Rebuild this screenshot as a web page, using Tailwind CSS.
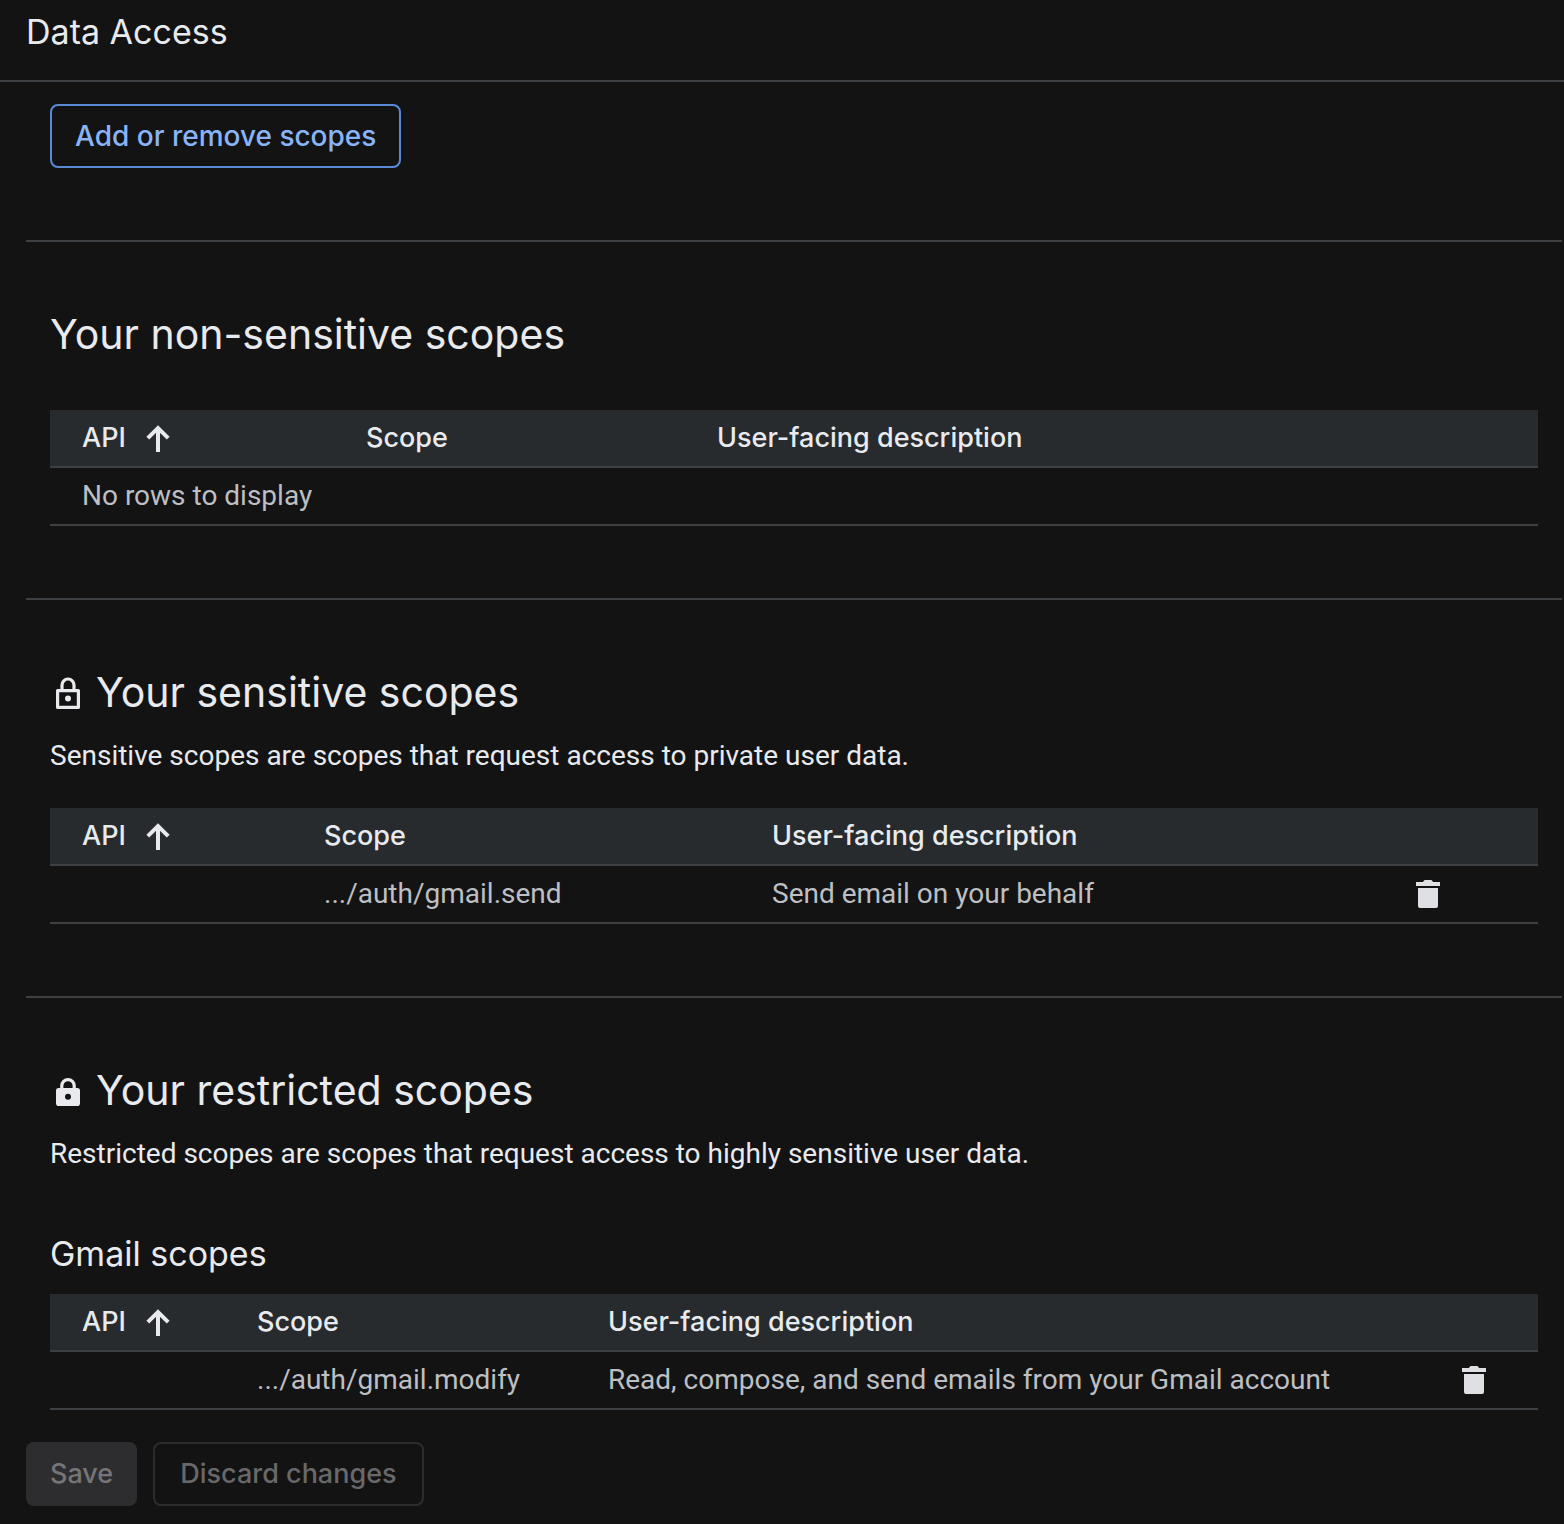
<!DOCTYPE html>
<html lang="en">
<head>
  <meta charset="UTF-8" />
  <meta name="viewport" content="width=device-width, initial-scale=1.0" />
  <title>Data Access</title>
  <script src="https://cdn.jsdelivr.net/npm/@tailwindcss/browser@4"></script>
</head>
<body class="min-h-screen bg-[#131314] text-[#e8eaed] text-[28px] leading-10 font-['Roboto',sans-serif]">
  <header class="px-[26px] pt-2 pb-6 border-b-2 border-[#3c4043]">
    <h1 class="text-[34px] leading-12 font-['Inter',sans-serif]">Data Access</h1>
  </header>

  <main class="pl-[26px] pr-0.5">
    <div class="px-6 pt-[22px] pb-[72px]">
      <button type="button" class="h-16 px-[23px] rounded-lg border-2 border-[#5a8ad6] text-[#8ab4f8] text-[28px] font-medium font-['Inter',sans-serif]">Add or remove scopes</button>
    </div>

    <!-- Non-sensitive -->
    <section class="px-6 pt-16 pb-[72px] border-t-2 border-[#3c4043]">
      <h2 class="text-[41px] leading-14 font-['Inter',sans-serif]">Your non-sensitive scopes</h2>
      <table class="w-full mt-12 table-fixed border-separate border-spacing-0 text-left">
        <colgroup>
          <col class="w-[284px]" />
          <col class="w-[351px]" />
          <col />
        </colgroup>
        <thead class="bg-[#272b2e] text-[27px] font-['Inter',sans-serif]">
          <tr class="h-[58px]">
            <th class="pl-8 py-0 font-medium border-b-2 border-[#3c4043]">
              <span class="flex items-center gap-3.5">API
                <svg class="size-9" viewBox="0 0 18 18" fill="none" stroke="currentColor" stroke-width="2" aria-hidden="true"><path d="M9 16V4M3.9 9.1L9 4l5.1 5.1" /></svg>
              </span>
            </th>
            <th class="pl-8 py-0 font-medium border-b-2 border-[#3c4043]">Scope</th>
            <th class="pl-8 py-0 font-medium border-b-2 border-[#3c4043]">User-facing description</th>
          </tr>
        </thead>
        <tbody class="text-[#bdbfc2]">
          <tr class="h-[58px]">
            <td colspan="3" class="pl-8 py-0 border-b-2 border-[#3c4043]">No rows to display</td>
          </tr>
        </tbody>
      </table>
    </section>

    <!-- Sensitive -->
    <section class="px-6 pt-16 pb-[72px] border-t-2 border-[#3c4043]">
      <h2 class="flex items-center gap-2.5 text-[41px] leading-14 font-['Inter',sans-serif]">
        <svg class="size-9" viewBox="0 0 18 18" aria-hidden="true">
          <path fill="none" stroke="currentColor" stroke-width="1.6" stroke-linejoin="round" d="M3.8 8.3h10.4v8.400H3.800zM6 8V5.500a3 3 0 0 1 6 0V8" />
          <circle cx="9" cy="12.300" r="1.500" fill="currentColor" />
        </svg>
        Your sensitive scopes
      </h2>
      <p class="mt-4">Sensitive scopes are scopes that request access to private user data.</p>
      <table class="w-full mt-8 table-fixed border-separate border-spacing-0 text-left">
        <colgroup>
          <col class="w-[242px]" />
          <col class="w-[448px]" />
          <col />
          <col class="w-[160px]" />
        </colgroup>
        <thead class="bg-[#272b2e] text-[27px] font-['Inter',sans-serif]">
          <tr class="h-[58px]">
            <th class="pl-8 py-0 font-medium border-b-2 border-[#3c4043]">
              <span class="flex items-center gap-3.5">API
                <svg class="size-9" viewBox="0 0 18 18" fill="none" stroke="currentColor" stroke-width="2" aria-hidden="true"><path d="M9 16V4M3.9 9.1L9 4l5.1 5.1" /></svg>
              </span>
            </th>
            <th class="pl-8 py-0 font-medium border-b-2 border-[#3c4043]">Scope</th>
            <th class="pl-8 py-0 font-medium border-b-2 border-[#3c4043]">User-facing description</th>
            <th class="border-b-2 border-[#3c4043]"></th>
          </tr>
        </thead>
        <tbody class="text-[#bdbfc2]">
          <tr class="h-[58px]">
            <td class="border-b-2 border-[#3c4043]"></td>
            <td class="pl-8 py-0 border-b-2 border-[#3c4043]">.../auth/gmail.send</td>
            <td class="pl-8 py-0 border-b-2 border-[#3c4043]">Send email on your behalf</td>
            <td class="pl-8 py-0 border-b-2 border-[#3c4043]">
              <button type="button" aria-label="Delete scope" class="block text-[#dfe0e3]">
                <svg class="size-9" viewBox="0 0 18 18" fill="currentColor" aria-hidden="true"><path d="M3 3h3.4l.9-1h3.4l.9 1H15v2H3zM4 6h10v9a1 1 0 0 1-1 1H5a1 1 0 0 1-1-1z" /></svg>
              </button>
            </td>
          </tr>
        </tbody>
      </table>
    </section>

    <!-- Restricted -->
    <section class="px-6 pt-16 border-t-2 border-[#3c4043]">
      <h2 class="flex items-center gap-2.5 text-[41px] leading-14 font-['Inter',sans-serif]">
        <svg class="size-9" viewBox="0 0 18 18" aria-hidden="true">
          <path fill="none" stroke="currentColor" stroke-width="1.6" d="M5.9 9V6.9a3.1 3.1 0 0 1 6.2 0V9" />
          <path fill="currentColor" fill-rule="evenodd" d="M4.4 8h9.2A1.4 1.4 0 0 1 15 9.4v6.2a1.4 1.4 0 0 1-1.4 1.4H4.4A1.4 1.4 0 0 1 3 15.6V9.4A1.4 1.4 0 0 1 4.4 8zM9 10.9a1.5 1.5 0 1 0 0 3 1.5 1.5 0 0 0 0-3z" />
        </svg>
        Your restricted scopes
      </h2>
      <p class="mt-4">Restricted scopes are scopes that request access to highly sensitive user data.</p>
      <h3 class="mt-14 text-[34px] leading-12 font-['Inter',sans-serif]">Gmail scopes</h3>
      <table class="w-full mt-4 table-fixed border-separate border-spacing-0 text-left">
        <colgroup>
          <col class="w-[175px]" />
          <col class="w-[351px]" />
          <col />
          <col class="w-[114px]" />
        </colgroup>
        <thead class="bg-[#272b2e] text-[27px] font-['Inter',sans-serif]">
          <tr class="h-[58px]">
            <th class="pl-8 py-0 font-medium border-b-2 border-[#3c4043]">
              <span class="flex items-center gap-3.5">API
                <svg class="size-9" viewBox="0 0 18 18" fill="none" stroke="currentColor" stroke-width="2" aria-hidden="true"><path d="M9 16V4M3.9 9.1L9 4l5.1 5.1" /></svg>
              </span>
            </th>
            <th class="pl-8 py-0 font-medium border-b-2 border-[#3c4043]">Scope</th>
            <th class="pl-8 py-0 font-medium border-b-2 border-[#3c4043]">User-facing description</th>
            <th class="border-b-2 border-[#3c4043]"></th>
          </tr>
        </thead>
        <tbody class="text-[#bdbfc2]">
          <tr class="h-[58px]">
            <td class="border-b-2 border-[#3c4043]"></td>
            <td class="pl-8 py-0 border-b-2 border-[#3c4043]">.../auth/gmail.modify</td>
            <td class="pl-8 py-0 border-b-2 border-[#3c4043]">Read, compose, and send emails from your Gmail account</td>
            <td class="pl-8 py-0 border-b-2 border-[#3c4043]">
              <button type="button" aria-label="Delete scope" class="block text-[#dfe0e3]">
                <svg class="size-9" viewBox="0 0 18 18" fill="currentColor" aria-hidden="true"><path d="M3 3h3.4l.9-1h3.4l.9 1H15v2H3zM4 6h10v9a1 1 0 0 1-1 1H5a1 1 0 0 1-1-1z" /></svg>
              </button>
            </td>
          </tr>
        </tbody>
      </table>
    </section>

    <div class="flex gap-4 pt-8 pb-4 text-[27px] font-medium font-['Inter',sans-serif]">
      <button type="button" disabled class="h-16 px-6 rounded-lg bg-[#2d2d2f] text-[#757577]">Save</button>
      <button type="button" disabled class="h-16 px-[25px] rounded-lg border-2 border-[#2d2d2f] text-[#68686a]">Discard changes</button>
    </div>
  </main>
</body>
</html>
